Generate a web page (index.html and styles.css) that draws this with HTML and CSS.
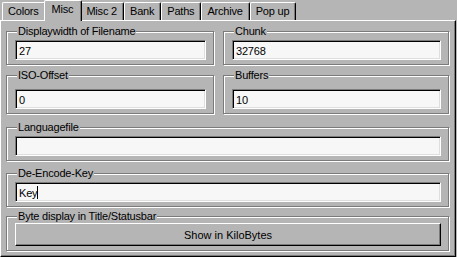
FILE: index.html
```html
<!DOCTYPE html>
<html lang="en">
<head>
  <meta charset="UTF-8">
  <title>Options</title>
  <link rel="stylesheet" href="styles.css">
</head>
<body>

  <div class="tabs">
    <div class="tab">Colors</div>
    <div class="tab active">Misc</div>
    <div class="tab">Misc 2</div>
    <div class="tab">Bank</div>
    <div class="tab">Paths</div>
    <div class="tab">Archive</div>
    <div class="tab">Pop up</div>
  </div>

  <div class="panel">
    <div class="row">
      <div class="group">
        <span class="caption">Displaywidth of Filename</span>
        <div class="field">27</div>
      </div>
      <div class="group">
        <span class="caption">Chunk</span>
        <div class="field">32768</div>
      </div>
    </div>

    <div class="row iso">
      <div class="group">
        <span class="caption">ISO-Offset</span>
        <div class="field">0</div>
      </div>
      <div class="group">
        <span class="caption">Buffers</span>
        <div class="field">10</div>
      </div>
    </div>

    <div class="group lang">
      <span class="caption">Languagefile</span>
      <div class="field"></div>
    </div>

    <div class="group key">
      <span class="caption">De-Encode-Key</span>
      <div class="field">Key<span class="caret"></span></div>
    </div>

    <div class="group bytes">
      <span class="caption">Byte display in Title/Statusbar</span>
      <button class="btn">Show in KiloBytes</button>
    </div>
  </div>

</body>
</html>
```

FILE: styles.css
```css
body {
  margin: 0;
  background: #b5b5b5;
  font-family: "Liberation Sans", Arial, sans-serif;
  font-size: 11px;
  letter-spacing: -0.2px;
  color: #000;
}
.tabs {
  display: flex;
  align-items: flex-end;
  height: 20px;
  padding-left: 2px;
}
.tab {
  height: 18px;
  line-height: 17px;
  padding: 0 6px 0 5px;
  border-top: 1px solid #fff;
  border-left: 1px solid #fff;
  border-right: 1px solid #000;
  border-radius: 2px 2px 0 0;
  box-shadow: inset -1px 0 #7b7b7b;
  box-sizing: border-box;
}
.tab.active {
  position: relative;
  z-index: 1;
  height: 21px;
  margin: 0 -2px -1px;
  padding: 0 8px 3px 7px;
  background: #b5b5b5;
}
.panel {
  width: 456px;
  height: 237px;
  box-sizing: border-box;
  border: 1px solid #fff;
  border-right-color: #000;
  border-bottom-color: #000;
  box-shadow: inset -1px -1px #7b7b7b;
  padding: 10px 6px 0 5px;
  display: flex;
  flex-direction: column;
}
.row {
  display: grid;
  grid-template-columns: 208px 1fr;
  gap: 9px;
}
.group {
  border: 1px solid #7b7b7b;
  box-shadow: inset 1px 1px #fff, 1px 1px #fff;
  padding: 0 7px 4px 8px;
}
.caption {
  display: block;
  width: max-content;
  margin: -7px 0 2px 2px;
  padding: 0 1px;
  line-height: 13px;
  background: #b5b5b5;
}
.iso {
  margin-top: 10px;
}
.iso .caption {
  margin-bottom: 7px;
}
.lang {
  margin-top: 13px;
}
.key {
  margin-top: 12px;
}
.bytes {
  margin-top: 9px;
}
.bytes .caption {
  margin-bottom: 0;
}
.field {
  height: 20px;
  line-height: 16px;
  box-sizing: border-box;
  padding: 2px 3px 0;
  background: #f7f7f7;
  border: 1px solid #7b7b7b;
  border-right-color: #fff;
  border-bottom-color: #fff;
  box-shadow: inset 1px 1px #000, inset -1px -1px #dedede;
}
.caret {
  display: inline-block;
  width: 1px;
  height: 13px;
  background: #000;
  vertical-align: -2px;
}
.btn {
  display: block;
  width: 100%;
  height: 23px;
  font: inherit;
  color: #000;
  background: #b5b5b5;
  border: 1px solid #fff;
  border-right-color: #000;
  border-bottom-color: #000;
  box-shadow: inset -1px -1px #7b7b7b;
  padding: 0;
}
```
